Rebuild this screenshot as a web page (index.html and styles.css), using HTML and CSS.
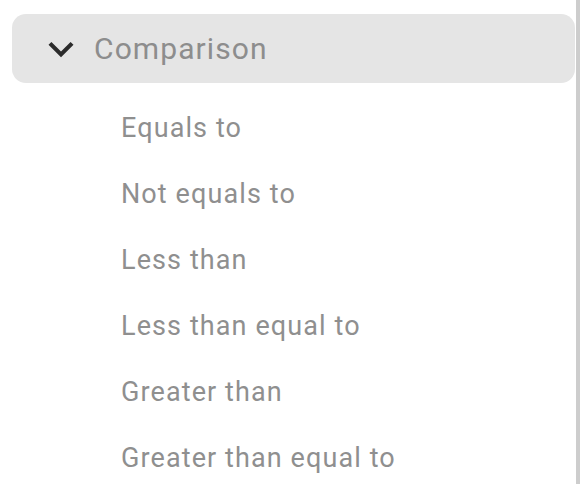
FILE: index.html
```html
<!DOCTYPE html>
<html lang="en">
<head>
    <meta charset="UTF-8">
    <meta name="viewport" content="width=device-width, initial-scale=1.0">
    <title>Comparison</title>
    <link rel="stylesheet" href="styles.css">
</head>
<body>
    <div class="panel">
        <div class="group">
            <div class="group-header">
                <svg class="chevron" viewBox="0 0 24 24"><path d="M16.59 8.59 12 13.17 7.41 8.59 6 10l6 6 6-6z"></path></svg>
                <span class="group-label">Comparison</span>
            </div>
            <ul class="items">
                <li>Equals to</li>
                <li>Not equals to</li>
                <li>Less than</li>
                <li>Less than equal to</li>
                <li>Greater than</li>
                <li>Greater than equal to</li>
            </ul>
        </div>
    </div>
</body>
</html>
```

FILE: styles.css
```css
html, body {
    margin: 0;
    height: 100%;
}
body {
    font-family: Roboto, "Noto Sans", sans-serif;
    background: #fff;
}
.panel {
    box-sizing: border-box;
    width: 580px;
    height: 100%;
    padding: 14px 1px 0 12px;
    border-right: 4px solid #cdcdcd;
}
.group-header {
    display: flex;
    align-items: center;
    height: 69px;
    background: #e5e5e5;
    border-radius: 14px;
}
.chevron {
    width: 50px;
    height: 50px;
    margin-left: 24px;
    margin-right: 8px;
    fill: #2b2b2b;
}
.group-label {
    font-size: 30px;
    letter-spacing: 1.1px;
    color: #8d8d8d;
    line-height: 69px;
}
.items {
    list-style: none;
    margin: 12px 0 0;
    padding: 0 0 0 109px;
}
.items li {
    height: 66px;
    line-height: 66px;
    font-size: 27px;
    letter-spacing: 1.1px;
    color: #8f8f8f;
}
```
